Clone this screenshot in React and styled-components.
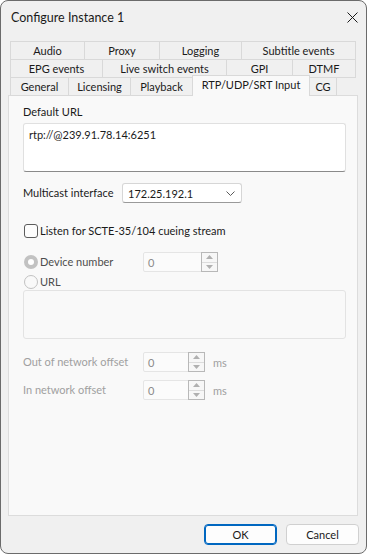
import React from "react";
import styled, { createGlobalStyle } from "styled-components";

const GlobalStyle = createGlobalStyle`
  html, body {
    margin: 0;
    padding: 0;
    background: #ffffff;
  }
  body {
    font-family: "Segoe UI", Lato, "Noto Sans", sans-serif;
    font-size: 11px;
    color: #1a1a1a;
  }
`;

const TAB_ROWS = [
  [
    { label: "Audio", w: 75 },
    { label: "Proxy", w: 76 },
    { label: "Logging", w: 83 },
    { label: "Subtitle events", w: 115 },
  ],
  [
    { label: "EPG events", w: 93 },
    { label: "Live switch events", w: 125 },
    { label: "GPI", w: 67 },
    { label: "DTMF", w: 64 },
  ],
  [
    { label: "General", w: 59 },
    { label: "Licensing", w: 63 },
    { label: "Playback", w: 63 },
    { label: "RTP/UDP/SRT Input", w: 118, active: true },
    { label: "CG", w: 28 },
  ],
];

const Window = styled.div`
  box-sizing: border-box;
  width: 367px;
  height: 554px;
  border: 1px solid #6b6b6b;
  border-radius: 8px;
  background: #f0f0f0;
  display: flex;
  flex-direction: column;
  overflow: hidden;
`;

const TitleBar = styled.div`
  height: 32px;
  flex: none;
  display: flex;
  align-items: center;
  justify-content: space-between;
  padding: 0 8px 0 10px;
  font-size: 12.5px;
  color: #1a1a1a;
`;

const CloseIcon = () => (
  <svg width="11" height="11" viewBox="0 0 11 11">
    <path d="M0.5 0.5 L10.5 10.5 M10.5 0.5 L0.5 10.5" stroke="#1a1a1a" strokeWidth="1" fill="none" />
  </svg>
);

const TabStrip = styled.div`
  margin: 8px 0 0 9px;
  display: flex;
  flex-direction: column;
`;

const TabRow = styled.div`
  display: flex;
  align-items: flex-end;
  height: 19px;
  margin-bottom: -1px;
`;

const Tab = styled.div`
  box-sizing: border-box;
  width: ${(p) => p.$w}px;
  height: ${(p) => (p.$active ? 21 : 19)}px;
  margin-right: -1px;
  border: 1px solid #d9d9d9;
  border-bottom: ${(p) => (p.$active ? "none" : "1px solid #d9d9d9")};
  background: ${(p) => (p.$active ? "#f9f9f9" : "#f0f0f0")};
  display: flex;
  align-items: center;
  justify-content: center;
  padding-bottom: ${(p) => (p.$active ? 3 : 0)}px;
  position: ${(p) => (p.$active ? "relative" : "static")};
  z-index: ${(p) => (p.$active ? 1 : 0)};
  white-space: nowrap;
  font-size: 11px;
  line-height: 14px;
`;

const Panel = styled.div`
  box-sizing: border-box;
  margin: 0 0 0 7px;
  width: 350px;
  height: 421px;
  border: 1px solid #dcdcdc;
  background: #f9f9f9;
  padding: 8px 0 0 14px;
  display: flex;
  flex-direction: column;
`;

const Label = styled.div`
  line-height: 16px;
  height: 16px;
  color: ${(p) => (p.$disabled ? "#a0a0a0" : "#1a1a1a")};
  width: ${(p) => (p.$w ? `${p.$w}px` : "auto")};
  flex: none;
  white-space: nowrap;
`;

const TextArea = styled.div`
  box-sizing: border-box;
  width: 323px;
  height: 49px;
  margin-top: ${(p) => p.$mt || 0}px;
  background: ${(p) => (p.$disabled ? "#f9f9f9" : "#ffffff")};
  border: 1px solid ${(p) => (p.$disabled ? "#e3e3e3" : "#e0e0e0")};
  border-bottom-color: ${(p) => (p.$disabled ? "#e3e3e3" : "#8a8a8a")};
  border-radius: 3px;
  padding: 3px 5px;
  line-height: 16px;
  color: #1a1a1a;
`;

const Row = styled.div`
  display: flex;
  align-items: center;
  margin-top: ${(p) => p.$mt || 0}px;
  height: ${(p) => p.$h || 16}px;
`;

const Combo = styled.div`
  box-sizing: border-box;
  width: 120px;
  height: 20px;
  background: #ffffff;
  border: 1px solid #d6d6d6;
  border-bottom-color: #9a9a9a;
  border-radius: 3px;
  display: flex;
  align-items: center;
  justify-content: space-between;
  padding: 0 6px 0 5px;
  color: #1a1a1a;
`;

const Chevron = () => (
  <svg width="9" height="5" viewBox="0 0 9 5">
    <path d="M0.5 0.5 L4.5 4.5 L8.5 0.5" stroke="#5a5a5a" strokeWidth="1" fill="none" />
  </svg>
);

const CheckBox = styled.div`
  box-sizing: border-box;
  width: 14px;
  height: 14px;
  border: 1px solid #5c5c5c;
  border-radius: 3px;
  background: #fdfdfd;
  margin: 0 2px 0 1px;
  flex: none;
`;

const Radio = styled.div`
  box-sizing: border-box;
  width: 14px;
  height: 14px;
  border-radius: 50%;
  flex: none;
  margin: 0 2px 0 1px;
  border: ${(p) => (p.$checked ? "4px solid #c2c2c2" : "1px solid #c2c2c2")};
  background: ${(p) => (p.$checked ? "#ffffff" : "#f9f9f9")};
`;

const RadioLabel = styled.div`
  width: ${(p) => p.$w}px;
  flex: none;
  display: flex;
  align-items: center;
  color: #4d4d4d;
  line-height: 16px;
  white-space: nowrap;
`;

const Spin = styled.div`
  box-sizing: border-box;
  width: ${(p) => p.$w}px;
  height: 20px;
  border: 1px solid #e5e5e5;
  border-radius: 2px;
  background: #fbfbfb;
  display: flex;
  align-items: stretch;
`;

const SpinValue = styled.div`
  flex: 1;
  display: flex;
  align-items: center;
  padding-left: 4px;
  color: #8a8a8a;
`;

const SpinButtons = styled.div`
  box-sizing: border-box;
  width: 17px;
  margin: -1px -1px -1px 0;
  border: 1px solid #b8b8b8;
  background: #f7f7f7;
  display: flex;
  flex-direction: column;
`;

const SpinHalf = styled.div`
  flex: 1;
  display: flex;
  align-items: center;
  justify-content: center;
  border-top: ${(p) => (p.$down ? "1px solid #dcdcdc" : "none")};
`;

const Arrow = ({ down }) => (
  <svg width="7" height="4" viewBox="0 0 7 4">
    <path d={down ? "M0 0 L7 0 L3.5 4 Z" : "M0 4 L7 4 L3.5 0 Z"} fill="#b0b0b0" />
  </svg>
);

const Unit = styled.div`
  margin-left: 8px;
  color: #a0a0a0;
`;

const Footer = styled.div`
  flex: none;
  display: flex;
  justify-content: flex-end;
  gap: 9px;
  padding: 8px 7px 0 0;
`;

const Button = styled.div`
  box-sizing: border-box;
  width: 73px;
  height: 21px;
  border-radius: 4px;
  background: #fdfdfd;
  border: 1px solid ${(p) => (p.$primary ? "#0067c0" : "#d0d0d0")};
  box-shadow: ${(p) => (p.$primary ? "inset 0 0 0 1px #0067c0" : "none")};
  display: flex;
  align-items: center;
  justify-content: center;
  color: #1a1a1a;
`;

const SpinBox = ({ w, value }) => (
  <Spin $w={w}>
    <SpinValue>{value}</SpinValue>
    <SpinButtons>
      <SpinHalf>
        <Arrow />
      </SpinHalf>
      <SpinHalf $down>
        <Arrow down />
      </SpinHalf>
    </SpinButtons>
  </Spin>
);

export default function App() {
  return (
    <>
      <GlobalStyle />
      <Window>
        <TitleBar>
          <span>Configure Instance 1</span>
          <CloseIcon />
        </TitleBar>

        <TabStrip>
          {TAB_ROWS.map((row, i) => (
            <TabRow key={i}>
              {row.map((tab) => (
                <Tab key={tab.label} $w={tab.w} $active={tab.active}>
                  {tab.label}
                </Tab>
              ))}
            </TabRow>
          ))}
        </TabStrip>

        <Panel>
          <Label>Default URL</Label>
          <TextArea $mt={3}>rtp://@239.91.78.14:6251</TextArea>

          <Row $mt={11} $h={20}>
            <Label $w={99}>Multicast interface</Label>
            <Combo>
              <span>172.25.192.1</span>
              <Chevron />
            </Combo>
          </Row>

          <Row $mt={20}>
            <CheckBox />
            <Label>Listen for SCTE-35/104 cueing stream</Label>
          </Row>

          <Row $mt={13} $h={20}>
            <RadioLabel $w={120}>
              <Radio $checked />
              Device number
            </RadioLabel>
            <SpinBox w={75} value="0" />
          </Row>

          <Row $mt={2}>
            <RadioLabel $w={120}>
              <Radio />
              URL
            </RadioLabel>
          </Row>
          <TextArea $disabled />

          <Row $mt={13} $h={20}>
            <Label $w={120} $disabled>
              Out of network offset
            </Label>
            <SpinBox w={62} value="0" />
            <Unit>ms</Unit>
          </Row>

          <Row $mt={8} $h={20}>
            <Label $w={120} $disabled>
              In network offset
            </Label>
            <SpinBox w={62} value="0" />
            <Unit>ms</Unit>
          </Row>
        </Panel>

        <Footer>
          <Button $primary>OK</Button>
          <Button>Cancel</Button>
        </Footer>
      </Window>
    </>
  );
}
